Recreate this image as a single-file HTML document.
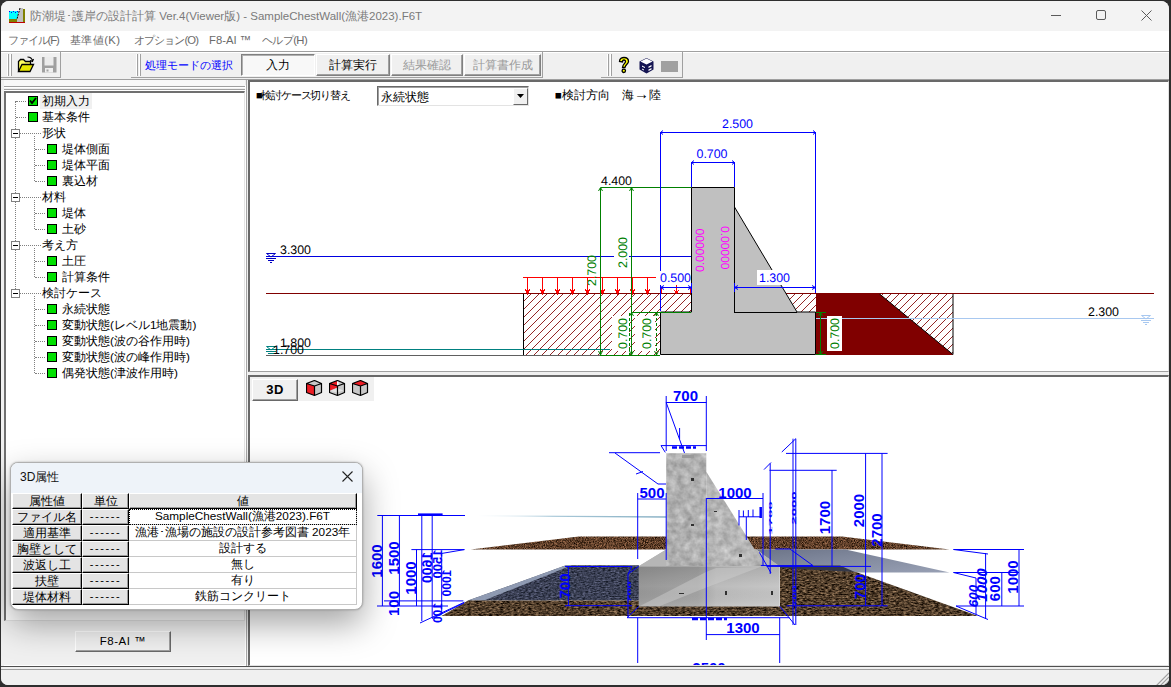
<!DOCTYPE html>
<html lang="ja">
<head>
<meta charset="utf-8">
<title>防潮堤・護岸の設計計算</title>
<style>
*{box-sizing:border-box;margin:0;padding:0}
html,body{width:1171px;height:687px;overflow:hidden;background:#2e2e2e;font-family:"Liberation Sans",sans-serif;font-size:12px;color:#000}
.abs{position:absolute}
.nw{white-space:nowrap;overflow:hidden}
#win{position:absolute;left:1px;top:1px;width:1168px;height:684px;background:#f0f0f0;border-radius:8px 8px 7px 7px;overflow:hidden}
#title{position:absolute;left:0;top:0;width:1170px;height:30px;background:#f3f3f3}
#title .t{position:absolute;left:29px;top:6px;font-size:11.5px;color:#7a7a7a;width:520px;height:18px;line-height:18px}
#menu{position:absolute;left:0;top:30px;width:1170px;height:20px;background:#fff}
#menu span{position:absolute;top:1px;font-size:11.3px;color:#6b6b6b;height:16px;line-height:16px}
#tbline{position:absolute;left:0;top:50px;width:1170px;height:1px;background:#a0a0a0}
#tbline2{position:absolute;left:0;top:51px;width:1170px;height:1px;background:#fff}
.band{position:absolute;top:51px;height:26px;border-right:1px solid #a0a0a0;border-bottom:1px solid #a0a0a0}
.grip{position:absolute;top:2px;width:2px;height:22px;border-left:1px solid #fff;border-right:1px solid #a0a0a0}
.btn{position:absolute;top:2px;height:22px;border:1px solid;border-color:#fff #808080 #808080 #fff;box-shadow:inset -1px -1px 0 #a0a0a0;font-size:12px;text-align:center;line-height:21px;background:#f0f0f0;white-space:nowrap;overflow:hidden}

#lp{position:absolute;left:3px;top:84px;width:242px;height:581px;background:#f0f0f0;border:0 solid #fff;border-width:0 1px 1px 0}
#tree{position:absolute;left:0;top:6px;width:241px;height:530px;background:#fff;border:2px solid;border-width:2px 1px 1px 2px;border-color:#707070 #e3e3e3 #e3e3e3 #707070}
.ti{position:absolute;height:16px;line-height:16px;font-size:11.75px;white-space:nowrap;color:#000}
.gb{position:absolute;width:10px;height:10px;background:#00e000;border:1px solid #000}
.pm{position:absolute;width:9px;height:9px;background:#fff;border:1px solid #808080}
.pm:after{content:"";position:absolute;left:1px;top:3px;width:5px;height:1px;background:#000}
.dv{position:absolute;width:0;border-left:1px dotted #808080}
.dh{position:absolute;height:0;border-top:1px dotted #808080}
#dlg{z-index:5;position:absolute;left:9px;top:461px;width:353px;height:148px;background:#fff;border-radius:8px;border:1px solid #b0b0b0;box-shadow:0 14px 34px rgba(0,0,0,.36),0 0 2px rgba(0,0,0,.3);overflow:hidden}
#dlg .hd{position:absolute;left:0;top:0;width:353px;height:30px;background:#eef3f9}
.c{position:absolute;height:16px;line-height:13px;font-size:11.75px;text-align:center;white-space:nowrap;overflow:hidden}
.ch{background:#e4e4e4;border:1px solid;border-color:#fff #000 #000 #fff;box-shadow:inset -1px -1px 0 #9a9a9a}
.cv{background:#fff;border-bottom:1px solid #c8c8c8;border-right:1px solid #c8c8c8}
#status{position:absolute;left:0;top:665px;width:1170px;height:20px;background:#f0f0f0;border-top:1px solid #505050}

.pane{position:absolute;background:#fff;border:solid;border-width:2px 1px 1px 2px;border-color:#696969 #e3e3e3 #e3e3e3 #696969;overflow:hidden}
.pw{position:absolute;left:-2px;top:-1px;width:921px;height:292px}
svg text{font-family:"Liberation Sans",sans-serif}
</style>
</head>
<body>
<div id="win">
  <div id="title">
    <svg class="abs" style="left:8px;top:6px" width="17" height="17" viewBox="0 0 17 17">
      <rect x="0" y="4" width="9" height="9" fill="#00ffff"/>
      <path d="M0 4h1v1h1v1h1v-1h1v-1h1v1h1v1h1v-1h1v-1h1v1H0z" fill="#0000ff"/>
      <rect x="0" y="12" width="9" height="3" fill="#808000"/>
      <path d="M11 1h3v14H8v-3z" fill="#c0c0c0"/>
      <path d="M11 1L8 12" stroke="#000" stroke-width="1" stroke-dasharray="2 1"/>
      <rect x="14" y="2" width="2" height="13" fill="#808000"/>
      <rect x="0" y="15" width="16" height="1" fill="#c00000"/>
    </svg>
    <div class="t nw">防潮堤･護岸の設計計算 Ver.4(Viewer版) - SampleChestWall(漁港2023).F6T</div>
    <svg class="abs" style="left:1040px;top:0" width="130" height="30" viewBox="0 0 130 30">
      <path d="M10 14.500h10" stroke="#5a5a5a" stroke-width="1" fill="none"/>
      <rect x="55.500" y="9.500" width="9" height="9" rx="1.500" stroke="#5a5a5a" stroke-width="1" fill="none"/>
      <path d="M100.500 9.500l10 10M110.500 9.500l-10 10" stroke="#5a5a5a" stroke-width="1" fill="none"/>
    </svg>
  </div>
  <div id="menu">
    <span class="nw" style="left:7px;width:56px;letter-spacing:-1.1px">ファイル(F)</span>
    <span class="nw" style="left:69px;width:58px;letter-spacing:.4px">基準値(K)</span>
    <span class="nw" style="left:133px;width:70px;letter-spacing:-.9px">オプション(O)</span>
    <span class="nw" style="left:208px;width:44px">F8-AI ™</span>
    <span class="nw" style="left:261px;width:56px;letter-spacing:-.6px">ヘルプ(H)</span>
  </div>
  <div id="tbline"></div><div id="tbline2"></div>
  <!-- toolbar bands -->
  <div class="band" style="left:0;width:60px">
    <div class="grip" style="left:6px"></div><div class="grip" style="left:9px"></div>
    <svg class="abs" style="left:16px;top:4px" width="18" height="18" viewBox="0 0 18 18">
      <path d="M1.500 15.500V5.500L3.500 3.500H6.500L8.500 5.500H13.500V8.500" fill="#ffff60" stroke="#000" stroke-width="1.300"/>
      <path d="M1.500 15.500L5 8.500H16.500L13 15.500z" fill="#e8e800" stroke="#000" stroke-width="1.300"/>
      <path d="M10.500 1C13 1 15 2.500 15.500 5M13 4.500L15.500 5.500L16.500 3" fill="none" stroke="#000" stroke-width="1.100"/>
    </svg>
    <svg class="abs" style="left:40px;top:4px" width="17" height="18" viewBox="0 0 17 18">
      <path d="M1 1H15.500V16.500H1z" fill="#a0a0a0"/>
      <path d="M3.500 1H12.500V9.500H3.500z" fill="#ececec"/>
      <path d="M4 12H12V16.500H4z" fill="#f0f0f0"/>
      <path d="M5.500 13.500H7.500V15.500H5.500z" fill="#a0a0a0"/>
    </svg>
  </div>
  <div class="band" style="left:130px;width:412px">
    <div class="grip" style="left:5px"></div><div class="grip" style="left:8px"></div>
    <div class="abs nw" style="left:14px;top:4px;width:94px;height:18px;line-height:18px;font-size:11.2px;color:#0000ff">処理モードの選択</div>
    <div class="btn" style="left:110px;width:74px;border-color:#808080 #fff #fff #808080;box-shadow:inset 1px 1px 0 #b0b0b0;background:#f8f8f8">入力</div>
    <div class="btn" style="left:185px;width:74px">計算実行</div>
    <div class="btn" style="left:260px;width:72px;color:#9a9a9a">結果確認</div>
    <div class="btn" style="left:333px;width:77px;color:#9a9a9a">計算書作成</div>
  </div>
  <div class="band" style="left:600px;width:82px">
    <div class="grip" style="left:6px"></div><div class="grip" style="left:9px"></div>
    <svg class="abs" style="left:16px;top:4px" width="14" height="18" viewBox="0 0 14 18">
      <path d="M2.500 5.500C2.500 2.500 5 1.500 7 1.500C9.500 1.500 11.500 3 11.500 5.500C11.500 8 8.500 8.500 8 11.500H5.500C5.500 8 8.500 7.500 8.500 5.500C8.500 4.500 8 4 7 4C6 4 5.500 4.500 5.500 6z" fill="#ffff00" stroke="#000" stroke-width="1.300"/>
      <circle cx="6.800" cy="14.800" r="1.700" fill="#ffff00" stroke="#000" stroke-width="1.300"/>
    </svg>
    <svg class="abs" style="left:37px;top:5px" width="17" height="17" viewBox="0 0 17 17">
      <path d="M8.500 1L15.500 4.500V12.500L8.500 16.500L1.500 12.500V4.500z" fill="#141452"/>
      <path d="M8.500 1.500L14.500 4.500L8.500 7.500L2.500 4.500z" fill="#fff"/>
      <path d="M4 8.500L7 10V11L4 9.800zM4 11.500L6 12.500V13.500L4 12.500zM10.500 9.500L13.500 8V9.500L10.500 11zM10.500 12.500L13.500 11V12.500L10.500 14z" fill="#fff"/>
    </svg>
    <div class="abs" style="left:60px;top:9px;width:17px;height:11px;background:#a0a0a0"></div>
  </div>
  <div class="abs" style="left:0;top:78px;width:1170px;height:1px;background:#a0a0a0"></div>

  <!-- left panel -->
  <div id="lp">
    <div class="abs" style="left:0;top:-5px;width:241px;height:6px;background:#f8f8f8"></div>
    <div class="abs" style="left:0;top:1px;width:241px;height:1px;background:#a0a0a0"></div>
    <div class="abs" style="left:0;top:2px;width:241px;height:1px;background:#fff"></div>
    <div class="abs" style="left:0;top:4px;width:241px;height:1px;background:#a0a0a0"></div>
    <div class="abs" style="left:0;top:5px;width:241px;height:1px;background:#fff"></div>
    <div id="tree"><div class="abs" style="left:1px;top:0">
      <div class="dv" style="left:8px;top:8px;height:192px"></div>
      <div class="dh" style="left:9px;top:8px;width:10px"></div>
      <div class="gb" style="left:21px;top:3px"><svg class="abs" style="left:0;top:0" width="8" height="8" viewBox="0 0 8 8"><path d="M1 3.500l2 2.500l4-5" stroke="#000" stroke-width="1.800" fill="none"/></svg></div>
      <div class="abs" style="left:33px;top:0px;width:52px;height:16px;background:#f0f0f0"></div>
      <div class="ti" style="left:35px;top:0px">初期入力</div>
      <div class="dh" style="left:9px;top:24px;width:10px"></div>
      <div class="gb" style="left:21px;top:19px"></div>
      <div class="ti" style="left:35px;top:16px">基本条件</div>
      <div class="dh" style="left:13px;top:40px;width:21px"></div>
      <div class="pm" style="left:4px;top:36px"></div>
      <div class="ti" style="left:35px;top:32px">形状</div>
      <div class="dv" style="left:27px;top:43px;height:45px"></div>
      <div class="dh" style="left:28px;top:56px;width:10px"></div>
      <div class="gb" style="left:40px;top:51px"></div>
      <div class="ti" style="left:55px;top:48px">堤体側面</div>
      <div class="dh" style="left:28px;top:72px;width:10px"></div>
      <div class="gb" style="left:40px;top:67px"></div>
      <div class="ti" style="left:55px;top:64px">堤体平面</div>
      <div class="dh" style="left:28px;top:88px;width:10px"></div>
      <div class="gb" style="left:40px;top:83px"></div>
      <div class="ti" style="left:55px;top:80px">裏込材</div>
      <div class="dh" style="left:13px;top:104px;width:21px"></div>
      <div class="pm" style="left:4px;top:100px"></div>
      <div class="ti" style="left:35px;top:96px">材料</div>
      <div class="dv" style="left:27px;top:107px;height:29px"></div>
      <div class="dh" style="left:28px;top:120px;width:10px"></div>
      <div class="gb" style="left:40px;top:115px"></div>
      <div class="ti" style="left:55px;top:112px">堤体</div>
      <div class="dh" style="left:28px;top:136px;width:10px"></div>
      <div class="gb" style="left:40px;top:131px"></div>
      <div class="ti" style="left:55px;top:128px">土砂</div>
      <div class="dh" style="left:13px;top:152px;width:21px"></div>
      <div class="pm" style="left:4px;top:148px"></div>
      <div class="ti" style="left:35px;top:144px">考え方</div>
      <div class="dv" style="left:27px;top:155px;height:29px"></div>
      <div class="dh" style="left:28px;top:168px;width:10px"></div>
      <div class="gb" style="left:40px;top:163px"></div>
      <div class="ti" style="left:55px;top:160px">土圧</div>
      <div class="dh" style="left:28px;top:184px;width:10px"></div>
      <div class="gb" style="left:40px;top:179px"></div>
      <div class="ti" style="left:55px;top:176px">計算条件</div>
      <div class="dh" style="left:13px;top:200px;width:21px"></div>
      <div class="pm" style="left:4px;top:196px"></div>
      <div class="ti" style="left:35px;top:192px">検討ケース</div>
      <div class="dv" style="left:27px;top:203px;height:77px"></div>
      <div class="dh" style="left:28px;top:216px;width:10px"></div>
      <div class="gb" style="left:40px;top:211px"></div>
      <div class="ti" style="left:55px;top:208px">永続状態</div>
      <div class="dh" style="left:28px;top:232px;width:10px"></div>
      <div class="gb" style="left:40px;top:227px"></div>
      <div class="ti" style="left:55px;top:224px">変動状態(レベル1地震動)</div>
      <div class="dh" style="left:28px;top:248px;width:10px"></div>
      <div class="gb" style="left:40px;top:243px"></div>
      <div class="ti" style="left:55px;top:240px">変動状態(波の谷作用時)</div>
      <div class="dh" style="left:28px;top:264px;width:10px"></div>
      <div class="gb" style="left:40px;top:259px"></div>
      <div class="ti" style="left:55px;top:256px">変動状態(波の峰作用時)</div>
      <div class="dh" style="left:28px;top:280px;width:10px"></div>
      <div class="gb" style="left:40px;top:275px"></div>
      <div class="ti" style="left:55px;top:272px">偶発状態(津波作用時)</div>
    </div></div>
    <div class="abs nw" style="left:71px;top:546px;width:96px;height:21px;border:1px solid;border-color:#fff #696969 #696969 #fff;box-shadow:inset -1px -1px 0 #a0a0a0;background:#f0f0f0;font-size:11.500px;text-align:center;line-height:18px;letter-spacing:.5px">F8-AI ™</div>
  </div>

  <!-- 2D pane -->
  <div class="pane" style="left:247px;top:79px;width:921px;height:292px;border-bottom-color:#a0a0a0"><div class="pw">
    <div class="abs nw" style="left:8px;top:6px;width:104px;height:16px;line-height:16px;font-size:11px;letter-spacing:-1.2px">■検討ケース切り替え</div>
    <div class="abs" style="left:129px;top:5px;width:152px;height:20px;background:#fff;border:1px solid;border-color:#696969 #e3e3e3 #e3e3e3 #696969;box-shadow:inset 1px 1px 0 #a0a0a0">
      <div class="abs nw" style="left:3px;top:2px;font-size:11.750px;line-height:16px;width:80px">永続状態</div>
      <div class="abs" style="left:135px;top:1px;width:15px;height:17px;background:#f0f0f0;border:1px solid;border-color:#fff #696969 #696969 #fff"></div>
      <svg class="abs" style="left:138px;top:7px" width="9" height="5" viewBox="0 0 9 5"><path d="M1 0h7L4.500 4z" fill="#000"/></svg>
    </div>
    <div class="abs nw" style="left:307px;top:6px;width:112px;height:16px;line-height:16px;font-size:11.500px">■検討方向　海<span style="font-size:15px;line-height:10px">→</span>陸</div>
    <svg class="abs" style="left:0;top:0" width="919" height="290" viewBox="248 81 919 290" shape-rendering="crispEdges">
      <defs>
        <pattern id="hat" width="8" height="8" patternUnits="userSpaceOnUse" x="3" y="6">
          <rect width="8" height="8" fill="#fff"/>
          <path d="M-1 9L9 -1M-1 1L1 -1M7 9L9 7" stroke="#800000" stroke-width="0.850" shape-rendering="auto"/>
        </pattern>
      </defs>
      <!-- hatched soil left -->
      <path d="M523 293.500H691V312H660.500V354.500H523z" fill="url(#hat)"/>
      <path d="M523.500 293.500V355" fill="none" stroke="#000" stroke-width="1"/>
      <!-- hatched right small -->
      <path d="M786 293.500H815.500V312H797z" fill="url(#hat)"/>
      <!-- dark red -->
      <path d="M815.500 293.500H953V354.500H815.500z" fill="#800000"/>
      <path d="M879 293.500H953V354.500z" fill="url(#hat)" stroke="#000" stroke-width="1" shape-rendering="auto"/>
      <!-- ground lines -->
      <path d="M266 293.500H691M786 293.500H1154" stroke="#800000" stroke-width="1"/>
      <!-- concrete -->
      <path d="M691.500 187.500H734.500V207L797 312H815.500V354.500H660.500V312H691.500z" fill="#c0c0c0" stroke="#000" stroke-width="1" shape-rendering="auto"/>
      <path d="M734.500 207V312H797" fill="none" stroke="#000" stroke-width="1"/>
      <!-- water lines -->
      <path d="M266 256.500H691" stroke="#0000e0" stroke-width="1"/>
      <path d="M266 349.500H610" stroke="#008080" stroke-width="1"/>
      <path d="M266 355.500H660" stroke="#606060" stroke-width="1"/>
      <path d="M815.500 318.500H1154" stroke="#a8c8f0" stroke-width="1"/>
      <!-- water symbols -->
      <g fill="none" stroke-width="1" shape-rendering="auto">
        <path d="M266.500 253.500h9l-4.500 3.500zM266 258.500h10M268 260.500h6M270 262.500h2" stroke="#0000c0"/>
        <path d="M266.500 346.500h9l-4.500 3.500zM266 351.500h10M268 353.500h6" stroke="#008080"/>
        <path d="M1141.500 315.500h9l-4.500 3.500zM1141 320.500h10M1143 322.500h6M1145 324.500h2" stroke="#a8c8f0"/>
      </g>
      <!-- red load -->
      <g stroke="#ff0000" stroke-width="1" fill="none">
        <path d="M523 277.500H656"/>
        <path d="M527.5 277V293M525.5 289.500L527.5 293.500L529.5 289.500" />
<path d="M542.5 277V293M540.5 289.500L542.5 293.500L544.5 289.500" />
<path d="M557.5 277V293M555.5 289.500L557.5 293.500L559.5 289.500" />
<path d="M572.5 277V293M570.5 289.500L572.5 293.500L574.5 289.500" />
<path d="M587.5 277V293M585.5 289.500L587.5 293.500L589.5 289.500" />
<path d="M602.5 277V293M600.5 289.500L602.5 293.500L604.5 289.500" />
<path d="M617.5 277V293M615.5 289.500L617.5 293.500L619.5 289.500" />
<path d="M632.5 277V293M630.5 289.500L632.5 293.500L634.5 289.500" />
<path d="M647.5 277V293M645.5 289.500L647.5 293.500L649.5 289.500" />
<path d="M661.500 288V293M676.500 285V293M674.500 290L676.500 293.500L678.500 290M690.500 288V293" />
      </g>
      <!-- green dims -->
      <g stroke="#008000" stroke-width="1" fill="none">
        <path d="M600.500 187.500H691M600.500 187.500V354M631.500 187.500V354"/>
        <path d="M631.500 312.500H691M600 355.500H660" />
        <path d="M629.500 313V355M656.500 313V355" stroke-dasharray="3 2"/>
        <path d="M598.500 351L600.500 355L602.500 351M629.500 316L631.500 312.500L633.500 316M629.500 351L631.500 355L633.500 351M654.500 316L656.500 312.500L658.500 316M654.500 351L656.500 355L658.500 351M598.500 191L600.500 187.500L602.500 191M629.500 191L631.500 187.500L633.500 191" shape-rendering="auto"/>
        <path d="M818.500 316L820.500 312.500L822.500 316M818.500 351L820.500 355L822.500 351" shape-rendering="auto"/>
        <path d="M820.500 312V355M816 312.500H826M816 354.500H826"/>
      </g>
      <!-- blue dims -->
      <g stroke="#0000ff" stroke-width="1" fill="none">
        <path d="M660.500 132V311M660.500 132.500H816M815.500 132V293M663 130.500L660.500 132.500L663 134.500M813 130.500L815.500 132.500L813 134.500" shape-rendering="auto"/>
        <path d="M691.500 162V187M734.500 162V187M691.500 162.500H735M694 160.500L691.500 162.500L694 164.500M732 160.500L734.500 162.500L732 164.500" shape-rendering="auto"/>
        <path d="M660.500 287.500H691M691.500 283V293M664 285.500L660.500 287.500L664 289.500M688 285.500L691.500 287.500L688 289.500" shape-rendering="auto"/>
        <path d="M734.500 287.500H816M734.500 283V292M738 285.500L734.500 287.500L738 289.500M812 285.500L815.500 287.500L812 289.500" shape-rendering="auto"/>
      </g>
      <!-- labels -->
      <g font-size="12.400" shape-rendering="auto" text-rendering="geometricPrecision">
        <text x="280" y="254" fill="#000">3.300</text>
        <text x="280" y="347" fill="#000">1.800</text>
        <text x="273" y="354" fill="#000">1.700</text>
        <text x="601" y="185" fill="#000">4.400</text>
        <text x="722" y="127.500" fill="#0000ff">2.500</text>
        <text x="696.500" y="157.500" fill="#0000ff">0.700</text>
        <rect x="659" y="271" width="32" height="14" fill="#fff"/>
        <text x="660" y="282" fill="#0000ff">0.500</text>
        <rect x="757" y="270" width="34" height="15" fill="#fff"/>
        <text x="759" y="282" fill="#0000ff">1.300</text>
        <text x="1088" y="316" fill="#000">2.300</text>
        <rect x="614" y="221" width="15" height="45" fill="#fff"/><rect x="612" y="316" width="17" height="35" fill="#fff"/><rect x="635" y="316" width="20" height="35" fill="#fff"/>
        <text transform="translate(596,286) rotate(-90)" fill="#008000">2.700</text>
        <text transform="translate(627,268) rotate(-90)" fill="#008000">2.000</text>
        <text transform="translate(627,349) rotate(-90)" fill="#008000">0.700</text>
        <text transform="translate(651,349) rotate(-90)" fill="#008000">0.700</text>
        <rect x="827" y="316" width="15" height="35" fill="#fff"/>
        <text transform="translate(839,349) rotate(-90)" fill="#008000">0.700</text>
        <text transform="translate(704,272) rotate(-90)" fill="#ff00ff" font-size="12">0.00000</text>
        <text transform="translate(721,226) rotate(90)" fill="#ff00ff" font-size="12">0.00000</text>
      </g>
    </svg>
  </div></div>

  <!-- 3D pane -->
  <div class="pane" style="left:247px;top:374px;width:921px;height:291px"><div class="pw">
    <div class="abs" style="left:2px;top:1px;width:124px;height:24px;background:#f0f0f0"></div>
    <div class="abs nw" style="left:4px;top:3px;width:46px;height:22px;border:1px solid;border-color:#fff #696969 #696969 #fff;box-shadow:inset -1px -1px 0 #a0a0a0;background:#f0f0f0;font-size:13px;font-weight:bold;text-align:center;line-height:19px;letter-spacing:.5px">3D</div>
    <svg class="abs" style="left:58px;top:4px" width="17" height="17" viewBox="0 0 17 17"><path d="M8.500 .5L15.500 3.500V12.500L8.500 15.500L.5 12.500V3.500z" fill="#c8c8c8"/><path d="M.5 3.500L8.500 6V15.500L.5 12.500z" fill="#ee1c24"/><path d="M8.500 .5L15.500 3.500V12.500L8.500 15.500L.5 12.500V3.500zM.5 3.500L8.500 6L15.500 3.500M8.500 6V15.500" fill="none" stroke="#000" stroke-width="1.200" stroke-linejoin="round"/></svg><svg class="abs" style="left:81px;top:4px" width="17" height="17" viewBox="0 0 17 17"><path d="M8.500 .5L15.500 3.500V12.500L8.500 15.500L.5 12.500V3.500z" fill="#c8c8c8"/><path d="M.5 3.500L8.500 .5V7.600L.5 10.800z" fill="#ee1c24"/><path d="M8 1h1.500v4.500h-1.500z" fill="#fff"/><path d="M1 11L8 8L14.500 10.500L8 12.500z" fill="#e4e4e4"/><path d="M8.500 .5L15.500 3.500V12.500L8.500 15.500L.5 12.500V3.500zM.5 3.500L8.500 6L15.500 3.500M8.500 6V15.500" fill="none" stroke="#000" stroke-width="1.200" stroke-linejoin="round"/></svg><svg class="abs" style="left:104px;top:4px" width="17" height="17" viewBox="0 0 17 17"><path d="M8.500 .5L15.500 3.500V12.500L8.500 15.500L.5 12.500V3.500z" fill="#c8c8c8"/><path d="M8.500 .5L15.500 3.500L8.500 6L.5 3.500z" fill="#ee1c24"/><path d="M8.500 .5L15.500 3.500V12.500L8.500 15.500L.5 12.500V3.500zM.5 3.500L8.500 6L15.500 3.500M8.500 6V15.500" fill="none" stroke="#000" stroke-width="1.200" stroke-linejoin="round"/></svg>
    <svg class="abs" style="left:0;top:0" width="919" height="290" viewBox="248 376 919 290">
      <defs>
        <filter id="soilA" x="0" y="0" width="100%" height="100%" color-interpolation-filters="sRGB">
          <feTurbulence type="fractalNoise" baseFrequency="1.1 1.2" numOctaves="2" seed="4" result="n"/>
          <feColorMatrix in="n" type="matrix" values="0.95 0 0 0 -0.105  0.7 0 0 0 -0.105  0.55 0 0 0 -0.115  0 0 0 0 1" result="c"/>
          <feComposite in="c" in2="SourceGraphic" operator="in"/>
        </filter>
        <filter id="soilB" x="0" y="0" width="100%" height="100%" color-interpolation-filters="sRGB">
          <feTurbulence type="fractalNoise" baseFrequency="0.28 0.7" numOctaves="3" seed="9" result="n"/>
          <feColorMatrix in="n" type="matrix" values="0.95 0 0 0 -0.155  0.8 0 0 0 -0.155  0.64 0 0 0 -0.15  0 0 0 0 1" result="c"/>
          <feComposite in="c" in2="SourceGraphic" operator="in"/>
        </filter>
        <filter id="rub" x="0" y="0" width="100%" height="100%" color-interpolation-filters="sRGB">
          <feTurbulence type="fractalNoise" baseFrequency="0.35 0.8" numOctaves="2" seed="2" result="n"/>
          <feColorMatrix in="n" type="matrix" values="0.5 0 0 0 -0.02  0.5 0 0 0 0.00  0.6 0 0 0 0.03  0 0 0 0 1" result="c"/>
          <feComposite in="c" in2="SourceGraphic" operator="in"/>
        </filter>
        <filter id="conc" x="0" y="0" width="100%" height="100%" color-interpolation-filters="sRGB">
          <feTurbulence type="fractalNoise" baseFrequency="0.13 0.13" numOctaves="3" seed="7" result="n"/>
          <feColorMatrix in="n" type="matrix" values="0.34 0 0 0 0.52  0.34 0 0 0 0.52  0.34 0 0 0 0.52  0 0 0 0 1" result="c"/>
          <feComposite in="c" in2="SourceGraphic" operator="in"/>
        </filter>
        <linearGradient id="wl" x1="0" x2="1"><stop offset="0" stop-color="#d8e8f0" stop-opacity="0"/><stop offset=".4" stop-color="#a8c8d8"/><stop offset="1" stop-color="#88b0c4"/></linearGradient>
        <linearGradient id="gp" x1="0" y1="0" x2="1" y2="1"><stop offset="0" stop-color="#6c7488"/><stop offset=".5" stop-color="#848ca0"/><stop offset="1" stop-color="#98a0b4"/></linearGradient>
        <linearGradient id="ff" x1="0" x2="1"><stop offset="0" stop-color="#989898"/><stop offset=".42" stop-color="#a4a4a4"/><stop offset=".55" stop-color="#bcbcbc"/><stop offset="1" stop-color="#c6c6c6"/></linearGradient>
        <linearGradient id="ffv" x1="0" y1="0" x2="0" y2="1"><stop offset="0" stop-color="#000" stop-opacity=".12"/><stop offset=".5" stop-color="#000" stop-opacity="0"/><stop offset="1" stop-color="#fff" stop-opacity=".12"/></linearGradient>
      </defs>
      <!-- water surface thin line -->
      <path d="M477 515.300L666.500 516.300V517.800L477 516.200z" fill="url(#wl)"/>
      <!-- upper soil band -->
      <path d="M470.600 549.500L579 536.500H842L949.600 549.500z" fill="#6a4630" filter="url(#soilA)"/>
      <!-- right grey-blue plane -->
      <path d="M756 549.500H845.500L949.600 572.500H852L780 567z" fill="url(#gp)"/>
      <path d="M780 565.500H840L856 572.500L780 569.500z" fill="#343848"/>
      <!-- left rubble plane -->
      <path d="M468 600.500L566 565.300H639V600.500z" fill="#3c4258" filter="url(#rub)"/>
      <path d="M468 600.500L566 565.300H572L484 600.500z" fill="#98a4bc" opacity=".9"/>
      <!-- lower soil band -->
      <path d="M441.500 616L468 600.500H639V606H780V568L856 572L978 616z" fill="#6b5238" filter="url(#soilB)"/>
      <!-- concrete -->
      <path d="M638.700 566.300L666.200 549.400H756L779.700 566.300z" fill="#b4b4b4"/>
      <path d="M638.700 566.300H779.700V606.500H638.700z" fill="url(#ff)"/>
      <path d="M638.700 566.300H779.700V606.500H638.700z" fill="url(#ffv)"/>
      <path d="M640 606L706 572L716 568L760 567L700 590L660 606z" fill="#d0d0d0" opacity=".45"/>
      <path d="M706.300 471.700L765 566L706.300 566z" fill="#c8c8c8" filter="url(#conc)"/>
      <path d="M706.300 471.700L765 566L706.300 566z" fill="#fff" opacity=".08"/>
      <path d="M666.200 453.300H706.300V566H666.200z" fill="#c0c0c0" filter="url(#conc)"/>
      <path d="M666.200 549.400L638.700 566.300H666.200z" fill="#b6b6b6"/>
      <g fill="#303030"><rect x="691" y="478" width="3" height="3"/><rect x="691" y="524" width="3" height="2"/><rect x="714" y="511" width="3" height="1"/><rect x="739" y="554" width="3" height="3"/><rect x="725" y="591" width="2" height="4"/><rect x="771" y="591" width="2" height="4"/><rect x="679" y="593" width="5" height="1"/><rect x="682" y="455" width="12" height="3" fill="#9a9a9a"/></g>

      <!-- 3D dimension lines -->
      <g stroke="#0000ff" stroke-width="1" fill="none">
        <path d="M666 402.500H706.500M666.200 396V451M706.300 396V451M666.200 402.500L684.500 453M679.600 428V439M661 445.600H706.500M661 445.600L665.300 452.400"/>
        <path d="M672 447.500H696" stroke-width="2.500" stroke-dasharray="5 2"/>
        <path d="M609 452.700H660M615 453L658 484H666M636 474L643 471.500"/>
        <path d="M637.700 499H666M637.700 493V559M637.700 617.700V663"/>
        <path d="M706.300 498.500H763M763 493V566M706.300 498V640"/>
        <path d="M739 516.800H761M739 510V525.400M743.400 510.500V517M748.300 510V517M753 509.500V517M746.300 517V540M666.200 493V560"/>
        <path d="M760.700 507V518" stroke-width="2.500"/>
        <path d="M770.200 463.500V574M793 438.700V625M795.800 438.700V625M786 453.400H887.600M781.800 452L795.800 438.700M769.500 470.300H836.700M764 469.600L771 462.500"/>
        <path d="M832 470V566M865.600 453.400V606M882 453.400V606M766.600 566.400H871M786.600 605.800H887.600"/>
        <path d="M780 606.500L795 625M759.400 552.400L771 573M775.400 549H790L813 565.600M760.800 565.600H813"/>
        <path d="M953.500 549.500H1024M953.500 572.500H1019M956 606H1024M1019 549.500V606M1001.800 572.500V606M985.600 553V618.700M953.500 549.500L988 554M953.500 572.500L976 578M956 606L988 619.500M976 578V614.400"/>
        <path d="M377.300 515.500H465M382.400 515.500V606M399.400 515.500V606M411.400 549.600H464.400M416.500 549.600V606M421.800 515.500V621M432.200 515.500V618M441.700 553V613.600M384 600.900H463.400M377 606H448M420 623L464.400 602.200M432 618.500L464 603M440.800 553.600L464.400 549.600"/>
        <path d="M418 514.400H442.600" stroke-width="2"/>
        <path d="M627 617.700H789.600M628 574V617M628 574L638.700 566.300M627 617.700L638.700 606.500M779.700 617.700V663M706 634.600H779.700"/>
        <path d="M565 566.500H632M565 605.700H632M568.400 566.500V605.700M632 566.500L628 574"/>
        <path d="M692 619H727" stroke-width="2.500" stroke-dasharray="6 2"/>
      </g>
      <g fill="#0000ff" font-weight="bold" font-size="15" text-anchor="middle">
        <text x="685.500" y="401">700</text>
        <text x="652" y="497.500">500</text>
        <text x="735" y="497.500">1000</text>
        <text x="743" y="632.500">1300</text>
        <text x="709" y="673">2500</text>
        <text transform="translate(824.5,517.6) rotate(-90)" text-anchor="middle" dy="5.4" font-size="15" >1700</text>
        <text transform="translate(858.7,510.5) rotate(-90)" text-anchor="middle" dy="5.4" font-size="15" >2000</text>
        <text transform="translate(876.5,530) rotate(-90)" text-anchor="middle" dy="5.4" font-size="15" >2700</text>
        <text transform="translate(859.5,586.7) rotate(-90)" text-anchor="middle" dy="5.4" font-size="15" >700</text>
        <text transform="translate(1012.5,577) rotate(-90)" text-anchor="middle" dy="5.4" font-size="15" >1000</text>
        <text transform="translate(995,588.7) rotate(-90)" text-anchor="middle" dy="5.4" font-size="15" >600</text>
        <text transform="translate(982,585) rotate(-90)" text-anchor="middle" dy="5" font-size="15" font-style="italic">1000</text>
        <text transform="translate(973,596) rotate(-90)" text-anchor="middle" dy="4.500" font-size="13.500" font-style="italic">600</text>
        <text transform="translate(376.4,561) rotate(-90)" text-anchor="middle" dy="5.4" font-size="15" >1600</text>
        <text transform="translate(393.4,558) rotate(-90)" text-anchor="middle" dy="5.4" font-size="15" >1500</text>
        <text transform="translate(410.4,578) rotate(-90)" text-anchor="middle" dy="5.4" font-size="15" >1000</text>
        <text transform="translate(393.4,603.5) rotate(-90)" text-anchor="middle" dy="5.4" font-size="15" >100</text>
        <text transform="translate(564.5,586) rotate(-90)" text-anchor="middle" dy="5.4" font-size="15" >700</text>
        <text transform="translate(426.5,567.5) rotate(-90) scale(-1,1)" text-anchor="middle" dy="5.0" font-size="14">1600</text>
        <text transform="translate(437,564) rotate(-90) scale(-1,1)" text-anchor="middle" dy="4.7" font-size="13">1500</text>
        <text transform="translate(446.4,583) rotate(-90) scale(-1,1)" text-anchor="middle" dy="4.3" font-size="12">1000</text>
        <text transform="translate(438,613) rotate(-90) scale(-1,1)" text-anchor="middle" dy="4.3" font-size="12">100</text>
        <text transform="translate(771,518) rotate(-90) scale(1,.28)" text-anchor="middle" dy="5" font-size="15">1700</text>
        <text transform="translate(794.500,508) rotate(-90) scale(1,.3)" text-anchor="middle" dy="5" font-size="15">2000</text><text transform="translate(794.500,596) rotate(-90) scale(1,.3)" text-anchor="middle" dy="5" font-size="13">700</text><text transform="translate(629.500,592) rotate(-90) scale(1,.3)" text-anchor="middle" dy="5" font-size="13">700</text>
      </g>
    </svg>
  </div></div>
  <div id="dlg">
    <div class="hd"></div>
    <div class="abs nw" style="left:9px;top:6px;font-size:12px;line-height:16px;width:60px;color:#111">3D属性</div>
    <svg class="abs" style="left:330px;top:7px" width="13" height="13" viewBox="0 0 13 13"><path d="M1.500 1.500l10 10M11.500 1.500l-10 10" stroke="#222" stroke-width="1.100" fill="none"/></svg>
    <div class="abs" style="left:1px;top:30px;width:345px;height:112px;background:#000"></div>
      <div class="c ch" style="left:1px;top:30px;width:70px">属性値</div>
      <div class="c ch" style="left:71px;top:30px;width:47px">単位</div>
      <div class="c ch" style="left:118px;top:30px;width:228px">値</div>
      <div class="c ch" style="left:1px;top:46px;width:70px">ファイル名</div>
      <div class="c ch" style="left:71px;top:46px;width:47px;letter-spacing:1.6px;font-size:11px">------</div>
      <div class="c cv" style="left:118px;top:46px;width:228px;outline:1px dotted #000;outline-offset:-1px;">SampleChestWall(漁港2023).F6T</div>
      <div class="c ch" style="left:1px;top:62px;width:70px">適用基準</div>
      <div class="c ch" style="left:71px;top:62px;width:47px;letter-spacing:1.6px;font-size:11px">------</div>
      <div class="c cv" style="left:118px;top:62px;width:228px;">漁港･漁場の施設の設計参考図書 2023年</div>
      <div class="c ch" style="left:1px;top:78px;width:70px">胸壁として</div>
      <div class="c ch" style="left:71px;top:78px;width:47px;letter-spacing:1.6px;font-size:11px">------</div>
      <div class="c cv" style="left:118px;top:78px;width:228px;">設計する</div>
      <div class="c ch" style="left:1px;top:94px;width:70px">波返し工</div>
      <div class="c ch" style="left:71px;top:94px;width:47px;letter-spacing:1.6px;font-size:11px">------</div>
      <div class="c cv" style="left:118px;top:94px;width:228px;">無し</div>
      <div class="c ch" style="left:1px;top:110px;width:70px">扶壁</div>
      <div class="c ch" style="left:71px;top:110px;width:47px;letter-spacing:1.6px;font-size:11px">------</div>
      <div class="c cv" style="left:118px;top:110px;width:228px;">有り</div>
      <div class="c ch" style="left:1px;top:126px;width:70px">堤体材料</div>
      <div class="c ch" style="left:71px;top:126px;width:47px;letter-spacing:1.6px;font-size:11px">------</div>
      <div class="c cv" style="left:118px;top:126px;width:228px;">鉄筋コンクリート</div>
  </div>
  <div class="abs" style="left:245px;top:79px;width:1px;height:586px;background:#a8a8a8"></div>
  <div id="status">
    <div class="abs" style="left:0;top:2px;width:1170px;height:1px;background:#a0a0a0"></div>
    <svg class="abs" style="left:1153px;top:4px" width="15" height="15" viewBox="0 0 15 15"><path d="M2 15L15 2M6 15L15 6M10 15L15 10" stroke="#a0a0a0" stroke-width="1.200" fill="none"/></svg>
  </div>
  
</div>
</body>
</html>
